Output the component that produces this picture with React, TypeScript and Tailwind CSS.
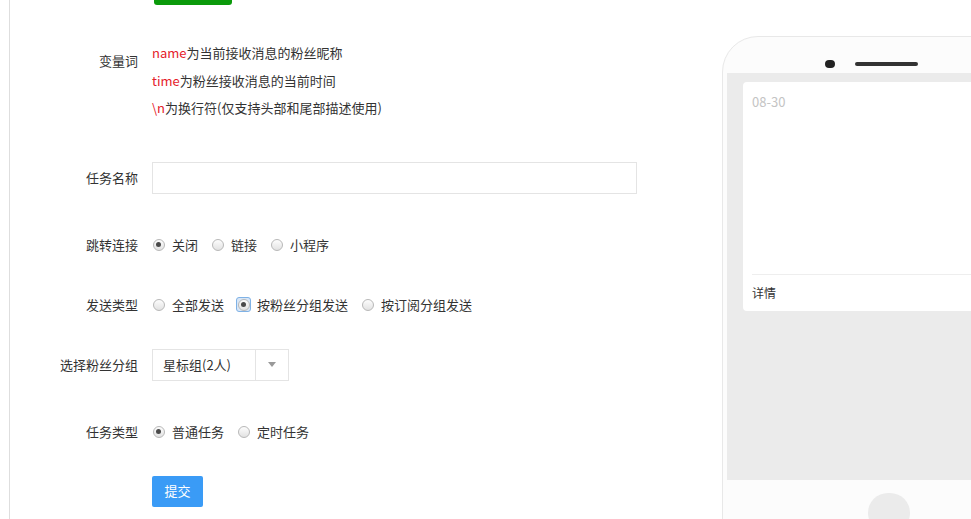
import React from "react";

const font = { fontFamily: '"Noto Sans CJK SC", "Noto Sans", sans-serif' };

function Radio({ label, checked, focused }: { label: string; checked?: boolean; focused?: boolean }) {
  return (
    <label className="flex items-center">
      <span
        className={
          focused
            ? "w-[15px] h-[15px] -ml-[1px] flex items-center justify-center rounded-[3px] border border-[#7fb2e6] bg-[#d8e6f6]"
            : "w-[13px] h-[13px] flex items-center justify-center"
        }
      >
        <span className="w-[12px] h-[12px] rounded-full border border-[#b8b8b8] bg-gradient-to-b from-[#fdfdfd] to-[#e2e2e2] flex items-center justify-center">
          {checked && <span className="w-[5px] h-[5px] rounded-full bg-[#4a4a4a]" />}
        </span>
      </span>
      <span className={focused ? "ml-[6px] mr-[13px]" : "ml-[7px] mr-[13px]"}>{label}</span>
    </label>
  );
}

function Row({ label, className, children }: { label: string; className?: string; children: React.ReactNode }) {
  return (
    <div className={"flex items-center " + (className ?? "")}>
      <div className="w-[128px] text-right mr-[14px] shrink-0">{label}</div>
      {children}
    </div>
  );
}

export default function App() {
  return (
    <div className="w-[971px] h-[519px] overflow-hidden bg-white flex text-[13px] text-[#333]" style={font}>
      <div className="w-[9px] shrink-0" />
      <div className="flex border-l border-[#dedede] shrink-0">
        {/* form */}
        <div className="w-[712px] shrink-0 flex flex-col">
          <div className="ml-[144px] -mt-[27px] w-[78px] h-[32px] rounded-[3px] bg-[#0b9a0b]" />

          <div className="flex mt-[34px]">
            <div className="w-[128px] text-right mr-[14px] pt-[12px] shrink-0">变量词</div>
            <div className="leading-[27.5px]">
              <div>
                <span className="text-[#e5202a]">name</span>为当前接收消息的粉丝昵称
              </div>
              <div>
                <span className="text-[#e5202a]">time</span>为粉丝接收消息的当前时间
              </div>
              <div>
                <span className="text-[#e5202a]">\n</span>为换行符(仅支持头部和尾部描述使用)
              </div>
            </div>
          </div>

          <Row label="任务名称" className="mt-[40px] h-[32px]">
            <input className="w-[485px] h-[32px] border border-[#e4e4e4] outline-none px-2" />
          </Row>

          <Row label="跳转连接" className="mt-[41px] h-[20px]">
            <Radio label="关闭" checked />
            <Radio label="链接" />
            <Radio label="小程序" />
          </Row>

          <Row label="发送类型" className="mt-[40px] h-[20px]">
            <Radio label="全部发送" />
            <Radio label="按粉丝分组发送" checked focused />
            <Radio label="按订阅分组发送" />
          </Row>

          <Row label="选择粉丝分组" className="mt-[34px] h-[32px]">
            <div className="w-[137px] h-[32px] border border-[#e4e4e4] flex items-center">
              <span className="pl-[10px] flex-1">星标组(2人)</span>
              <span className="w-[33px] h-full border-l border-[#e4e4e4] flex items-center justify-center">
                <span className="w-0 h-0 border-l-[4px] border-r-[4px] border-t-[5px] border-l-transparent border-r-transparent border-t-[#999]" />
              </span>
            </div>
          </Row>

          <Row label="任务类型" className="mt-[41px] h-[20px]">
            <Radio label="普通任务" checked />
            <Radio label="定时任务" />
          </Row>

          <div className="flex mt-[34px]">
            <div className="w-[142px] shrink-0" />
            <button className="w-[51px] h-[31px] rounded-[2px] bg-[#3a9bf6] text-white text-[13px]">提交</button>
          </div>
        </div>

        {/* phone preview */}
        <div className="w-[334px] h-[520px] mt-[36px] shrink-0 rounded-[36px] border border-[#e8e8e8] bg-[#fcfcfc] px-[4px] flex flex-col">
          <div className="h-[36px] flex items-center pl-[98px] pt-[17px]">
            <span className="w-[10px] h-[8px] rounded-full bg-[#222]" />
            <span className="ml-[20px] w-[63px] h-[4px] rounded-full bg-[#333]" />
          </div>
          <div className="h-[407px] bg-[#ebebeb] px-[16px] pt-[9px]">
            <div className="h-[229px] bg-white rounded-[4px] px-[9px] flex flex-col">
              <div className="pt-[11px] text-[#c4c4c4] leading-[18px]">08-30</div>
              <div className="flex-1" />
              <div className="border-t border-[#eeeeee] h-[37px] flex items-center text-[12px] text-[#333]">详情</div>
            </div>
          </div>
          <div className="flex justify-center pt-[13px]">
            <span className="w-[42px] h-[40px] rounded-full bg-[#ebebeb]" />
          </div>
        </div>
      </div>
    </div>
  );
}
